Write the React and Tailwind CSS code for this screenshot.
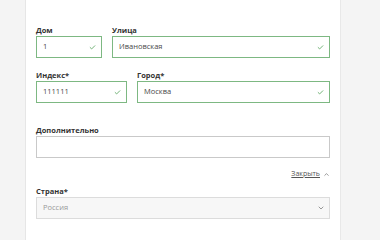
import { Check, ChevronDown, ChevronUp } from 'lucide-react'

function Field({ label, value, valid, className = '' }) {
  return (
    <div className={`flex flex-col ${className}`}>
      <label className="mb-[1px] text-[7.5px] font-bold leading-[10px] text-[#333]">{label}</label>
      <div
        className={`flex h-[22px] items-center justify-between border bg-white pl-[6px] pr-[5px] text-[7.5px] text-[#4a4a4a] ${
          valid ? 'border-[#7db882]' : 'border-[#c9c9c9]'
        }`}
      >
        <span>{value}</span>
        {valid && <Check size={7} strokeWidth={3} className="text-[#5fa865]" />}
      </div>
    </div>
  )
}

export default function App() {
  return (
    <div className="flex h-[240px] w-[380px] bg-[#f4f4f4] font-['Open_Sans',sans-serif]">
      <div className="w-[26px] border-r border-[#e6e6e6]" />
      <div className="w-[314px] bg-white px-[10px] pt-[25px]">
        <div className="grid grid-cols-[66px_1fr] gap-[10px]">
          <Field label="Дом" value="1" valid />
          <Field label="Улица" value="Ивановская" valid />
        </div>
        <div className="mt-[12px] grid grid-cols-[91px_1fr] gap-[10px]">
          <Field label="Индекс*" value="111111" valid />
          <Field label="Город*" value="Москва" valid />
        </div>
        <Field label="Дополнительно" value="" className="mt-[22px]" />
        <div className="mt-[11px] flex h-[10px] items-center justify-end gap-[3px] text-[7px] text-[#555]">
          <span className="underline">Закрыть</span>
          <ChevronUp size={7} strokeWidth={2} />
        </div>
        <div className="mt-[7px] flex flex-col">
          <label className="mb-[1px] text-[7.5px] font-bold leading-[10px] text-[#333]">Страна*</label>
          <div className="flex h-[22px] items-center justify-between border border-[#dcdcdc] bg-[#f7f7f7] pl-[6px] pr-[4px] text-[7.5px] text-[#999]">
            <span>Россия</span>
            <ChevronDown size={8} strokeWidth={2} className="text-[#666]" />
          </div>
        </div>
      </div>
      <div className="flex-1 border-l border-[#e8e8e8] bg-[#f4f4f4]" />
    </div>
  )
}
